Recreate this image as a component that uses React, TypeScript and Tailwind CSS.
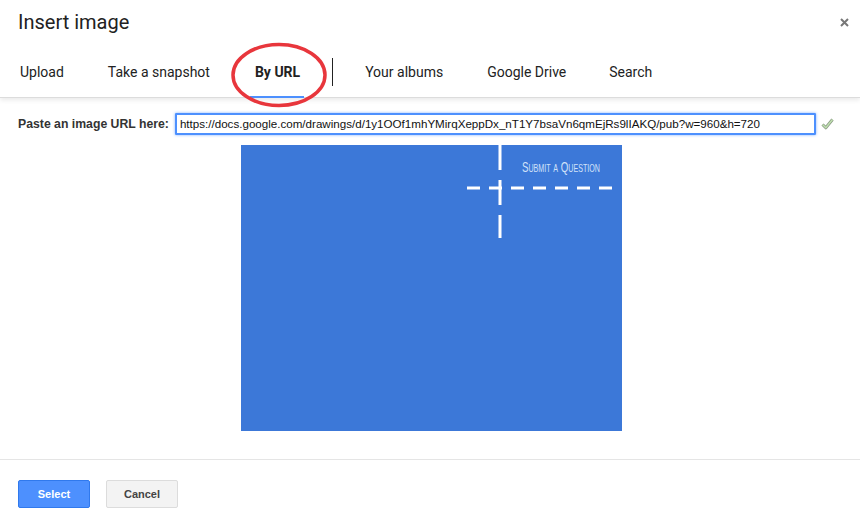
import React from "react"

const tabs = [
  { label: "Upload", ml: "ml-[20px]" },
  { label: "Take a snapshot", ml: "ml-[44px]" },
  { label: "By URL", ml: "ml-[45px]", active: true },
]

const tabsRight = [
  { label: "Your albums", ml: "ml-[32px]" },
  { label: "Google Drive", ml: "ml-[44px]" },
  { label: "Search", ml: "ml-[43px]" },
]

const url =
  "https://docs.google.com/drawings/d/1y1OOf1mhYMirqXeppDx_nT1Y7bsaVn6qmEjRs9lIAKQ/pub?w=960&h=720"

function Preview() {
  return (
    <svg width="381" height="286" viewBox="0 0 381 286" className="block">
      <rect width="381" height="286" fill="#3c78d8" />
      <line x1="259" y1="0" x2="259" y2="93" stroke="#fff" strokeWidth="3" strokeDasharray="25 10" />
      <line x1="226" y1="43" x2="373" y2="43" stroke="#fff" strokeWidth="3" strokeDasharray="13 9" />
      <text
        x="281"
        y="27"
        fontSize="15"
        fill="#d2e2f8"
        textLength="78"
        lengthAdjust="spacingAndGlyphs"
        style={{ fontFamily: '"Liberation Sans Narrow", "Liberation Sans", sans-serif', fontVariant: "small-caps" }}
      >
        Submit a Question
      </text>
    </svg>
  )
}

export default function App() {
  return (
    <div className="relative h-[522px] w-[860px] overflow-hidden bg-white font-['Roboto',sans-serif] text-[#222]">
      {/* header */}
      <div className="relative border-b border-[#dcdcdc] shadow-[0_2px_5px_rgba(0,0,0,0.09)]">
        <div className="flex h-[44px] items-center justify-between pl-[18px] pr-[11px]">
          <h1 className="text-[20px] leading-none text-[#222]">Insert image</h1>
          <svg width="9" height="9" viewBox="0 0 9 9">
            <path d="M1 1 L8 8 M8 1 L1 8" stroke="#777" strokeWidth="2" />
          </svg>
        </div>
        <div className="flex h-[53px] items-center pt-[3px] text-[14px] text-[#222]">
          {tabs.map((t) => (
            <div key={t.label} className={`relative flex h-full items-center ${t.ml} ${t.active ? "font-bold" : ""}`}>
              {t.label}
              {t.active && <span className="absolute bottom-[-1px] left-[-5px] right-[-4px] h-[2px] bg-[#4d90fe]" />}
            </div>
          ))}
          <div className="ml-[32px] h-[28px] w-px bg-[#222]" />
          {tabsRight.map((t) => (
            <div key={t.label} className={`flex h-full items-center ${t.ml}`}>
              {t.label}
            </div>
          ))}
        </div>
      </div>

      {/* url row */}
      <div className="mt-[15px] flex items-center pl-[18px] font-['Liberation_Sans',Arial,sans-serif]">
        <label className="text-[12.25px] font-bold text-[#333]">Paste an image URL here:</label>
        <div className="ml-[6px] flex h-[22px] w-[641px] items-center rounded-[1px] border-2 border-[#4d90fe] px-[3px] text-[11.6px] text-[#111] shadow-[0_0_3px_rgba(77,144,254,0.7)]">
          <span className="whitespace-nowrap">{url}</span>
        </div>
        <svg width="13" height="12" viewBox="0 0 13 12" className="ml-[5px]">
          <path d="M1.5 6.5 L4.8 9.8 L11.5 1.5" fill="none" stroke="#8c9a88" strokeWidth="3" strokeLinejoin="round" />
          <path d="M1.5 6.5 L4.8 9.8 L11.5 1.5" fill="none" stroke="#bfe0ae" strokeWidth="1.4" strokeLinejoin="round" />
        </svg>
      </div>

      {/* preview */}
      <div className="mt-[10px] flex pl-[241px]">
        <Preview />
      </div>

      {/* footer */}
      <div className="mt-[28px] flex gap-[16px] border-t border-[#e5e5e5] pl-[18px] pt-[20px] font-['Liberation_Sans',Arial,sans-serif]">
        <button className="h-[28px] w-[72px] rounded-[2px] border border-[#3079ed] bg-[#4d90fe] text-[11px] font-bold text-white">
          Select
        </button>
        <button className="h-[28px] w-[72px] rounded-[2px] border border-[#dcdcdc] bg-[#f3f3f3] text-[11px] font-bold text-[#444]">
          Cancel
        </button>
      </div>

      {/* annotation */}
      <svg width="104" height="72" viewBox="0 0 104 72" className="pointer-events-none absolute left-[228px] top-[40px]">
        <ellipse cx="51" cy="35" rx="46" ry="30.5" fill="none" stroke="#e8363c" strokeWidth="3.5" />
      </svg>
    </div>
  )
}
